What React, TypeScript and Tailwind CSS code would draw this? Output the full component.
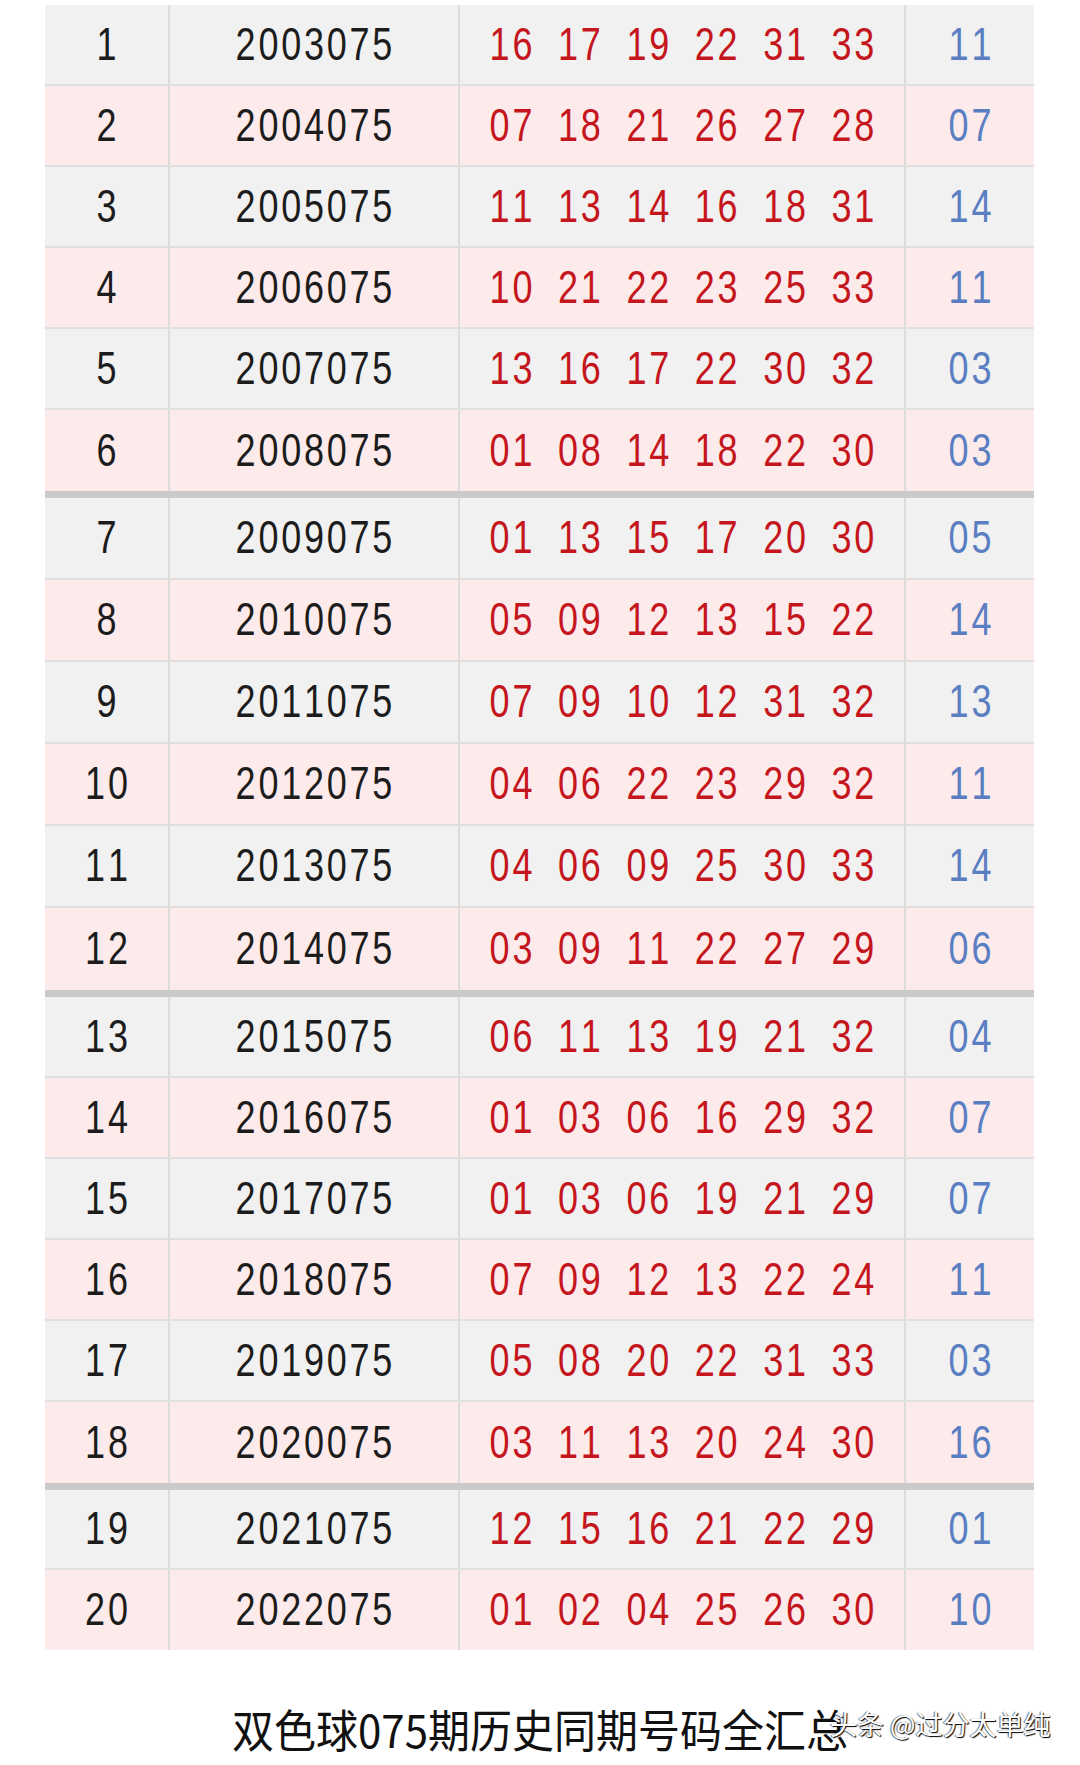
const rows: [number, string, string[], string][] = [
  [1, '2003075', ['16', '17', '19', '22', '31', '33'], '11'],
  [2, '2004075', ['07', '18', '21', '26', '27', '28'], '07'],
  [3, '2005075', ['11', '13', '14', '16', '18', '31'], '14'],
  [4, '2006075', ['10', '21', '22', '23', '25', '33'], '11'],
  [5, '2007075', ['13', '16', '17', '22', '30', '32'], '03'],
  [6, '2008075', ['01', '08', '14', '18', '22', '30'], '03'],
  [7, '2009075', ['01', '13', '15', '17', '20', '30'], '05'],
  [8, '2010075', ['05', '09', '12', '13', '15', '22'], '14'],
  [9, '2011075', ['07', '09', '10', '12', '31', '32'], '13'],
  [10, '2012075', ['04', '06', '22', '23', '29', '32'], '11'],
  [11, '2013075', ['04', '06', '09', '25', '30', '33'], '14'],
  [12, '2014075', ['03', '09', '11', '22', '27', '29'], '06'],
  [13, '2015075', ['06', '11', '13', '19', '21', '32'], '04'],
  [14, '2016075', ['01', '03', '06', '16', '29', '32'], '07'],
  [15, '2017075', ['01', '03', '06', '19', '21', '29'], '07'],
  [16, '2018075', ['07', '09', '12', '13', '22', '24'], '11'],
  [17, '2019075', ['05', '08', '20', '22', '31', '33'], '03'],
  [18, '2020075', ['03', '11', '13', '20', '24', '30'], '16'],
  [19, '2021075', ['12', '15', '16', '21', '22', '29'], '01'],
  [20, '2022075', ['01', '02', '04', '25', '26', '30'], '10'],
]

// row height per block of six, read off the screenshot
const blocks = [
  { h: 'h-[81px]', items: rows.slice(0, 6) },
  { h: 'h-[82px]', items: rows.slice(6, 12) },
  { h: 'h-[81px]', items: rows.slice(12, 18) },
  { h: 'h-[80px]', items: rows.slice(18) },
]

// fixed-pitch digits so every column lines up like the old SimSun table
function Num({ children, className }: { children: string; className: string }) {
  return (
    <span
      className={`flex origin-center scale-y-[1.28] font-['Liberation_Sans',sans-serif] text-[36px] leading-none ${className}`}
    >
      {children.split('').map((c, i) => (
        <span key={i} className="inline-block w-[22.8px] text-center">
          {c === ' ' ? '\u00a0' : c}
        </span>
      ))}
    </span>
  )
}

function Row({ r, h, last }: { r: (typeof rows)[number]; h: string; last: boolean }) {
  const [no, issue, reds, blue] = r
  const bg = no % 2 === 1 ? 'bg-[#f1f1f1]' : 'bg-[#fdebec]'
  return (
    <div
      className={`grid grid-cols-[123px_290px_446px_130px] ${h} ${bg} ${last ? '' : 'border-b-2 border-[#e0e0e0]'}`}
    >
      <div className="flex items-center justify-center">
        <Num className="text-[#1c1c1c]">{String(no)}</Num>
      </div>
      <div className="flex items-center justify-center border-l-2 border-[#dcdcdc]">
        <Num className="text-[#1c1c1c]">{issue}</Num>
      </div>
      <div className="flex items-center justify-center border-l-2 border-[#dcdcdc]">
        <Num className="text-[#c4161c]">{reds.join(' ')}</Num>
      </div>
      <div className="flex items-center justify-center border-l-2 border-[#dcdcdc]">
        <Num className="text-[#5a7ec2]">{blue}</Num>
      </div>
    </div>
  )
}

export default function App() {
  return (
    <div className="relative h-[1765px] w-[1080px] overflow-hidden bg-white">
      <div className="ml-[45px] mt-[5px] w-[989px]">
        {blocks.map((b, i) => (
          <div key={i}>
            {i > 0 && <div className="h-[7px] bg-[#cacaca]" />}
            {b.items.map((r, j) => (
              <Row key={r[0]} r={r} h={b.h} last={j === b.items.length - 1} />
            ))}
          </div>
        ))}
      </div>

      <div className="relative mt-[58px] flex justify-center">
        <p className="origin-center scale-y-[1.08] font-['Noto_Sans_CJK_SC',sans-serif] text-[42px] leading-none text-[#111]">
          双色球075期历史同期号码全汇总
        </p>
        <span className="absolute left-[830px] top-[2px] whitespace-pre font-['Noto_Sans_CJK_SC',sans-serif] text-[27px] leading-none text-white [text-shadow:1px_1px_1px_#000,-1px_0_1px_rgba(0,0,0,0.6)]">
          头条 @过分太单纯
        </span>
      </div>
    </div>
  )
}
